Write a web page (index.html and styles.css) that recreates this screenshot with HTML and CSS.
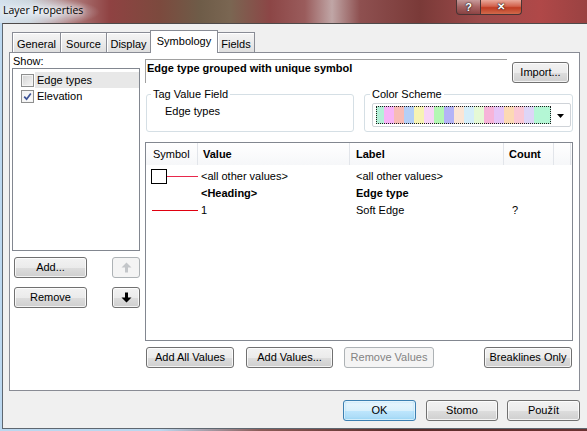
FILE: index.html
```html
<!DOCTYPE html>
<html lang="cs">
<head>
    <meta charset="UTF-8">
    <title>Layer Properties</title>
    <link rel="stylesheet" href="styles.css">
</head>
<body>

<div class="window">
    <div class="titlebar">
        <span class="title">Layer Properties</span>
        <div class="caption">
            <span class="cap-btn cap-help">?</span>
            <span class="cap-btn cap-close">✕</span>
        </div>
    </div>

    <div class="client">
        <div class="tabs">
            <div class="tab tab-general">General</div>
            <div class="tab tab-source">Source</div>
            <div class="tab tab-display">Display</div>
            <div class="tab tab-symbology active">Symbology</div>
            <div class="tab tab-fields">Fields</div>
        </div>

        <div class="page">
            <div class="side">
                <div class="show-label">Show:</div>
                <div class="listbox">
                    <div class="list-item">
                        <span class="check"></span>
                        <span class="item-text selected">Edge types</span>
                    </div>
                    <div class="list-item">
                        <span class="check checked">
                            <svg width="9" height="9" viewBox="0 0 9 9"><path d="M1.2 4.6 L3.6 7.2 L7.8 1.4" fill="none" stroke="#3d5396" stroke-width="1.7"/></svg>
                        </span>
                        <span class="item-text">Elevation</span>
                    </div>
                </div>
                <div class="side-row first">
                    <button class="btn btn-side">Add...</button>
                    <button class="btn btn-arrow" disabled>
                        <svg width="11" height="11" viewBox="0 0 11 11"><path d="M5.5 0.5 L10.5 5.5 H7 V10.5 H4 V5.5 H0.5 Z" fill="#c3c6c9"/></svg>
                    </button>
                </div>
                <div class="side-row">
                    <button class="btn btn-side">Remove</button>
                    <button class="btn btn-arrow">
                        <svg width="11" height="11" viewBox="0 0 11 11"><path d="M5.5 10.5 L10.5 5.5 H7 V0.5 H4 V5.5 H0.5 Z" fill="#000"/></svg>
                    </button>
                </div>
            </div>

            <div class="main">
                <div class="top-row">
                    <div class="heading">Edge type grouped with unique symbol</div>
                    <button class="btn btn-import">Import...</button>
                </div>

                <div class="groups">
                    <fieldset class="group group-tag">
                        <legend>Tag Value Field</legend>
                        <div class="tag-value">Edge types</div>
                    </fieldset>
                    <fieldset class="group group-color">
                        <legend>Color Scheme</legend>
                        <div class="combo">
                            <div class="ramp"></div>
                            <svg class="combo-arrow" width="7" height="4" viewBox="0 0 7 4"><path d="M0 0 H7 L3.5 4 Z" fill="#000"/></svg>
                        </div>
                    </fieldset>
                </div>

                <div class="table">
                    <div class="thead">
                        <div class="th col-sym">Symbol</div>
                        <div class="th col-val">Value</div>
                        <div class="th col-lab">Label</div>
                        <div class="th col-cnt">Count</div>
                        <div class="th col-end"></div>
                    </div>
                    <div class="tbody">
                        <div class="tr">
                            <div class="td col-sym">
                                <span class="sym-box"></span>
                                <span class="sym-line line-other"></span>
                            </div>
                            <div class="td col-val">&lt;all other values&gt;</div>
                            <div class="td col-lab">&lt;all other values&gt;</div>
                            <div class="td col-cnt"></div>
                        </div>
                        <div class="tr bold">
                            <div class="td col-sym"></div>
                            <div class="td col-val">&lt;Heading&gt;</div>
                            <div class="td col-lab">Edge type</div>
                            <div class="td col-cnt"></div>
                        </div>
                        <div class="tr">
                            <div class="td col-sym">
                                <span class="sym-line line-soft"></span>
                            </div>
                            <div class="td col-val">1</div>
                            <div class="td col-lab">Soft Edge</div>
                            <div class="td col-cnt">?</div>
                        </div>
                    </div>
                </div>

                <div class="value-buttons">
                    <button class="btn btn-all">Add All Values</button>
                    <button class="btn btn-values">Add Values...</button>
                    <button class="btn btn-remove" disabled>Remove Values</button>
                    <button class="btn btn-breaklines">Breaklines Only</button>
                </div>
            </div>
        </div>

        <div class="dialog-buttons">
            <button class="btn btn-dialog default">OK</button>
            <button class="btn btn-dialog btn-cancel">Stomo</button>
            <button class="btn btn-dialog btn-apply">Použít</button>
        </div>
    </div>
</div>

</body>
</html>
```

FILE: styles.css
```css
body {
  margin: 0;
  width: 587px;
  height: 431px;
  overflow: hidden;
  font-family: "Liberation Sans", Arial, sans-serif;
  font-size: 11px;
  color: #000;
  background: linear-gradient(90deg, #bcd8f0 0, #bcd8f0 160px, #8c5c58 260px, #5c2c2a 400px, #6c3232 587px);
}

.window {
  display: flex;
  flex-direction: column;
}

/* aero glass title bar */
.titlebar {
  height: 23px;
  display: flex;
  align-items: flex-start;
  background:
    radial-gradient(ellipse 60px 14px at 40px 12px, rgba(225,236,246,0.95), rgba(225,236,246,0) 100%),
    linear-gradient(90deg, #d4e2ee 0, #c9d2d8 30px, #b07e7e 70px, #8f4242 110px, #7c4a3e 160px, #6e5c48 200px,
      #7a6652 230px, #8c4646 270px, #9a5c5c 305px, #c0a6a6 332px, #8e5050 360px, #7a3a38 420px,
      #9c4a4a 480px, #b04848 540px, #9a4242 587px);
}

.title {
  padding: 3px 0 0 3px;
  font-family: "Open Sans", "Liberation Sans", sans-serif;
  font-size: 10.5px;
  line-height: 14px;
  color: #000;
  text-shadow: 0 0 5px #fff, 0 0 9px #fff;
}

.caption {
  display: flex;
  margin-left: auto;
  margin-right: 65px;
}

.cap-btn {
  box-sizing: border-box;
  height: 15px;
  border: 1px solid #4a3434;
  border-top: none;
  color: #fff;
  font-weight: bold;
  text-align: center;
  line-height: 14px;
  text-shadow: 0 0 2px #222, 0 0 1px #000;
}

.cap-help {
  width: 25px;
  border-radius: 0 0 0 4px;
  font-size: 11px;
  background: linear-gradient(rgba(255,255,255,0.45), rgba(255,255,255,0.15) 50%, rgba(120,60,60,0.4));
}

.cap-close {
  width: 42px;
  margin-left: -1px;
  border-radius: 0 0 4px 0;
  font-size: 10px;
  background: linear-gradient(#e9a89a, #d2624c 45%, #c03c22 55%, #d06a4c);
}

.client {
  box-sizing: border-box;
  height: 406px;
  margin-left: 2px;
  padding: 6px 0 0 6px;
  border-top: 1px solid #4e4a4a;
  border-left: 1px solid #5e6770;
  border-bottom: 1px solid #5e6770;
  background: #f0f0f0;
}

/* tabs */
.tabs {
  display: flex;
  align-items: flex-end;
  height: 22px;
  margin-left: 3px;
  position: relative;
  z-index: 1;
}

.tab {
  box-sizing: border-box;
  height: 20px;
  margin-right: -1px;
  padding-top: 3px;
  border: 1px solid #898c95;
  border-bottom: none;
  text-align: center;
  line-height: 16px;
  background: linear-gradient(#f5f5f5, #ebebeb 50%, #dfdfdf);
  box-shadow: inset 1px 1px 0 #fff;
}

.tab-general { width: 49px; }
.tab-source { width: 47px; }
.tab-display { width: 45px; }
.tab-symbology { width: 68px; }
.tab-fields { width: 38px; }

.tab.active {
  height: 23px;
  margin-bottom: -1px;
  padding-top: 2px;
  background: #fff;
  box-shadow: none;
  position: relative;
  z-index: 2;
}

/* tab page */
.page {
  box-sizing: border-box;
  width: 571px;
  height: 339px;
  border: 1px solid #898c95;
  background: #fff;
  display: flex;
}

.side {
  width: 128px;
  margin-left: 2px;
  padding-top: 2px;
  display: flex;
  flex-direction: column;
}

.show-label {
  margin-left: 1px;
  line-height: 13px;
}

.listbox {
  box-sizing: border-box;
  height: 183px;
  padding-top: 3px;
  border: 1px solid #828790;
  background: #fff;
}

.list-item {
  display: flex;
  align-items: center;
  height: 16px;
}

.check {
  box-sizing: border-box;
  width: 13px;
  height: 13px;
  margin-left: 8px;
  border: 1px solid #8e8f8f;
  display: flex;
  align-items: center;
  justify-content: center;
  background: linear-gradient(135deg, #d2d2d2, #e8e8e8 60%, #f6f6f6);
  box-shadow: inset 0 0 0 1px #f4f4f4;
}

.check.checked {
  background: linear-gradient(135deg, #f2f2f2, #fcfcfc);
}

.item-text {
  flex: 1;
  height: 16px;
  margin-left: 1px;
  padding-left: 2px;
  line-height: 17px;
}

.item-text.selected {
  background: #e8e8e8;
}

.side-row {
  display: flex;
  justify-content: space-between;
  margin: 9px 0 0 2px;
}

.side-row.first {
  margin-top: 6px;
}

/* buttons */
.btn {
  box-sizing: border-box;
  height: 21px;
  padding: 0;
  border: 1px solid #707070;
  border-radius: 3px;
  font: inherit;
  line-height: 19px;
  color: #000;
  text-align: center;
  background: linear-gradient(#f2f2f2 0%, #ebebeb 50%, #dddddd 51%, #cfcfcf 100%);
  box-shadow: inset 0 0 0 1px rgba(255,255,255,0.75);
}

.btn:disabled {
  color: #838383;
  border-color: #adb2b5;
  background: #f4f4f4;
  box-shadow: none;
}

.btn-side { width: 73px; }

.btn-arrow {
  width: 28px;
  display: flex;
  align-items: center;
  justify-content: center;
}

/* right side */
.main {
  width: 428px;
  margin-left: 5px;
  padding-top: 6px;
  display: flex;
  flex-direction: column;
}

.top-row {
  display: flex;
  align-items: flex-start;
}

.heading {
  box-sizing: border-box;
  width: 362px;
  height: 24px;
  padding: 2px 0 0 1px;
  border-top: 1px solid #a0a0a0;
  border-left: 1px solid #a0a0a0;
  font-weight: bold;
  line-height: 13px;
}

.btn-import {
  width: 57px;
  margin: 3px 0 0 5px;
}

.groups {
  display: flex;
  margin-top: 5px;
}

.group {
  box-sizing: border-box;
  height: 44px;
  margin: 0;
  padding: 0 4px;
  border: 1px solid #d5dfe5;
  border-radius: 3px;
  min-width: 0;
}

.group legend {
  padding: 0 2px;
  line-height: 13px;
}

.group-tag {
  width: 208px;
  margin-left: 1px;
}

.group-color {
  width: 209px;
  margin-left: 10px;
  padding: 0 0 0 5px;
}

.tag-value {
  margin-top: 4px;
  padding-left: 14px;
  line-height: 13px;
}

.combo {
  box-sizing: border-box;
  width: 199px;
  height: 24px;
  margin: 2px 0 0 2px;
  border: 1px solid #cfd3d8;
  border-radius: 2px;
  background: #fff;
  display: flex;
  align-items: center;
}

.ramp {
  box-sizing: border-box;
  width: 175px;
  height: 18px;
  margin-left: 3px;
  border: 1px dotted #1a1a1a;
  background: linear-gradient(90deg,
    #b4f0d8 0 7px, #f7b4f7 7px 17px, #f8bcb6 17px 27px, #b4cff7 27px 37px,
    #f7f3b4 37px 47px, #f7d5f7 47px 57px, #b4f7b4 57px 67px, #b4b4f7 67px 77px,
    #fbe5d5 77px 87px, #d5eef9 87px 97px, #e5f9d5 97px 107px, #f7b4d9 107px 117px,
    #e5c5f7 117px 127px, #fcd9b4 127px 137px, #fac8d5 137px 147px, #ddd5f7 147px 157px,
    #b4f7d5 157px 173px);
}

.combo-arrow {
  margin: 1px 6px 0 auto;
}

/* symbol list */
.table {
  box-sizing: border-box;
  height: 199px;
  margin-top: 10px;
  border: 1px solid #828790;
  background: #fff;
}

.thead {
  display: flex;
  height: 22px;
  background: linear-gradient(#ffffff, #f6f7f9);
}

.th {
  box-sizing: border-box;
  height: 22px;
  border-right: 1px solid #e2e5ea;
  line-height: 22px;
  font-weight: bold;
}

.th.col-sym { font-weight: normal; padding-left: 7px; }
.th.col-val { padding-left: 5px; }
.th.col-lab { padding-left: 6px; }
.th.col-cnt { padding-left: 5px; }

.col-sym { width: 52px; }
.col-val { width: 152px; }
.col-lab { width: 154px; }
.col-cnt { width: 50px; }
.col-end { width: 17px; }

.tbody {
  padding-top: 3px;
}

.tr {
  display: flex;
  height: 17px;
  line-height: 17px;
}

.tr.bold { font-weight: bold; }

.td.col-sym {
  display: flex;
  align-items: center;
}

.td.col-val { padding-left: 3px; }
.td.col-lab { padding-left: 3px; }
.td.col-cnt { padding-left: 2px; }

.sym-box {
  box-sizing: border-box;
  width: 16px;
  height: 15px;
  margin-left: 5px;
  border: 1px solid #000;
  background: #fff;
}

.sym-line {
  height: 1px;
}

.line-other {
  width: 31px;
  background: #e8284c;
}

.line-soft {
  width: 46px;
  margin-left: 6px;
  background: #e00010;
}

.value-buttons {
  display: flex;
  margin-top: 6px;
}

.btn-all { width: 88px; margin-left: 1px; }
.btn-values { width: 87px; margin-left: 12px; }
.btn-remove { width: 90px; margin-left: 11px; }
.btn-breaklines { width: 88px; margin: 0 1px 0 auto; }

/* OK / cancel / apply */
.dialog-buttons {
  width: 571px;
  margin-top: 9px;
  display: flex;
  justify-content: flex-end;
}

.btn-dialog { width: 73px; }
.btn-cancel { width: 72px; margin-left: 10px; }
.btn-apply { margin-left: 9px; }

.btn-dialog.default {
  border-color: #3c7fb1;
  background: linear-gradient(#eaf6fd 0%, #d9f0fc 50%, #bee6fd 51%, #a7d9f5 100%);
  box-shadow: inset 0 0 0 1px rgba(255,255,255,0.6), inset 0 0 3px #6bc4f0;
}
```
